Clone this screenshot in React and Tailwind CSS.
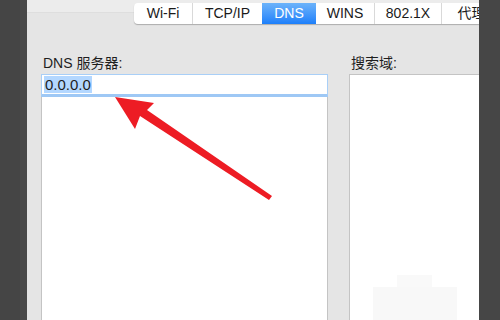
import React from 'react';

const tabs = [
  { label: 'Wi-Fi', w: 'w-[58px]' },
  { label: 'TCP/IP', w: 'w-[70px]' },
  { label: 'DNS', w: 'w-[54px]', active: true },
  { label: 'WINS', w: 'w-[58px]' },
  { label: '802.1X', w: 'w-[67px]' },
  { label: '代理', w: 'w-[60px]' },
];

const font = { fontFamily: '"Liberation Sans", "Noto Sans CJK SC", sans-serif' };

export default function App() {
  return (
    <div className="relative w-[500px] h-[320px] flex overflow-hidden text-[#1e1e1e]" style={font}>
      <div className="w-[27px] h-full flex">
        <div className="w-[20px] bg-[#454545]" />
        <div className="w-[7px] bg-[#4a4a4a]" />
      </div>

      {/* pane */}
      <div className="flex-1 h-full bg-[#e5e5e5] flex flex-col overflow-hidden">
        <div className="h-[13px] bg-[#ececec] border-b border-[#dedede] shrink-0" />

        {/* tab bar */}
        <div className="-mt-[10px] pl-[107px] flex shrink-0">
          <div className="flex h-[21px] bg-white rounded-l-[4px] shadow-[0_1px_1px_rgba(0,0,0,0.25)] overflow-hidden">
            {tabs.map((t, i) => (
              <div
                key={t.label}
                className={`${t.w} h-full flex items-center justify-center text-[14px] shrink-0 ${
                  t.active
                    ? 'bg-gradient-to-b from-[#6cb3fa] to-[#1b7ffa] text-white'
                    : 'text-[#1a1a1a]'
                } ${i > 0 && !t.active && !tabs[i - 1].active ? 'border-l border-[#d9d9d9]' : ''}`}
              >
                {t.label}
              </div>
            ))}
          </div>
        </div>

        {/* columns */}
        <div className="flex-1 flex pl-[14px] pt-[31px] gap-[21px] min-h-0">
          <div className="w-[287px] flex flex-col min-h-0">
            <div className="text-[14px] leading-[17px] pl-[2px] h-[19px]">DNS 服务器:</div>
            <div className="flex-1 bg-white border-l border-r border-[#c4c4c4] flex flex-col">
              <div className="h-[23px] -ml-px -mr-px border border-[#a9cff7] border-b-[3px] border-b-[#9ec8f5] flex items-center pl-[2px]">
                <span className="bg-[#b3d7ff] text-[15px] leading-[17px] px-[1px]">0.0.0.0</span>
              </div>
            </div>
          </div>
          <div className="flex-1 flex flex-col min-h-0">
            <div className="text-[14px] leading-[17px] pl-[2px] h-[19px]">搜索域:</div>
            <div className="flex-1 bg-white border-l border-t border-[#c4c4c4] relative">
              <div className="absolute left-[47px] top-[200px] w-[35px] h-[14px] bg-[#f9f9f9]" />
              <div className="absolute left-[23px] top-[212px] w-[84px] h-[40px] bg-[#f8f8f8]" />
            </div>
          </div>
        </div>
      </div>

      <div className="w-[21px] h-full bg-[#464646]" />

      {/* red arrow annotation */}
      <svg className="absolute inset-0 pointer-events-none" width="500" height="320" viewBox="0 0 500 320">
        <polygon
          points="115,97 154,103 147,110 272,196 269,200 140,116 135,129"
          fill="#ed1c24"
        />
      </svg>
    </div>
  );
}
